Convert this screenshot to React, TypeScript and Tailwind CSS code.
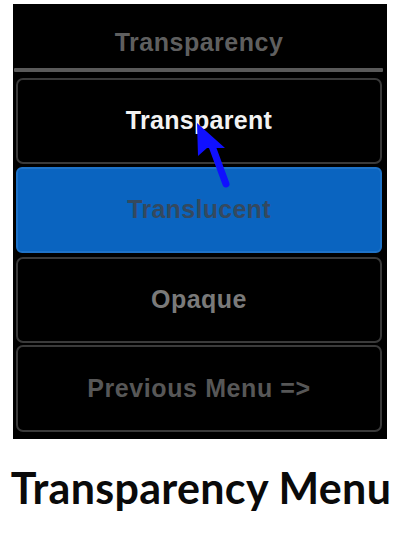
import React from "react";

const btnFont = { fontFamily: '"Liberation Sans", Arial, sans-serif' };

export default function App() {
  return (
    <div className="w-[402px] h-[534px] bg-white relative overflow-hidden">
      <div className="pt-[4px] pl-[13px]">
        <div
          className="w-[374px] h-[435px] bg-black flex flex-col pl-[3px] pr-[5px] pb-[7px]"
          style={btnFont}
        >
          <div className="h-[64px] flex items-center justify-center text-[25px] font-bold text-[#5f5f5f] tracking-[0.5px] pt-[13px]">
            Transparency
          </div>
          <div className="h-[4px] -ml-[2px] mr-[-1px] bg-[#5a5a5a] rounded-[1px]" />
          <div className="h-[6px]" />
          <div className="h-[86px] rounded-[7px] border-2 border-[#3a3a3a] flex items-center justify-center text-[25px] font-bold text-[#f2f2f2] tracking-[0.3px]">
            Transparent
          </div>
          <div className="h-[3px]" />
          <div className="h-[86px] rounded-[6px] border-2 border-[#1f73c8] bg-[#0a64c0] flex items-center justify-center text-[25px] font-bold text-[#34495f] tracking-[0.3px]">
            Translucent
          </div>
          <div className="h-[4px]" />
          <div className="h-[86px] rounded-[7px] border-2 border-[#3a3a3a] flex items-center justify-center text-[25px] font-bold text-[#7a7a7a] tracking-[0.5px]">
            Opaque
          </div>
          <div className="h-[2px]" />
          <div className="h-[87px] rounded-[7px] border-2 border-[#3a3a3a] flex items-center justify-center text-[25px] font-bold text-[#575757] tracking-[0.6px]">
            Previous Menu =&gt;
          </div>
        </div>
      </div>
      <div
        className="mt-[25px] text-center text-[43px] leading-[48px] font-bold text-[#0a0a0a] tracking-[0.3px]"
        style={{ fontFamily: 'Lato, "Open Sans", sans-serif' }}
      >
        Transparency Menu
      </div>
      <svg
        className="absolute left-0 top-0 pointer-events-none"
        width="402"
        height="534"
        viewBox="0 0 402 534"
      >
        <path d="M197 123 L198 156 L207 148 L225 148 Z" fill="#1010ff" />
        <path d="M212 146 L226 184" stroke="#1010ff" strokeWidth="7" strokeLinecap="round" />
      </svg>
    </div>
  );
}
